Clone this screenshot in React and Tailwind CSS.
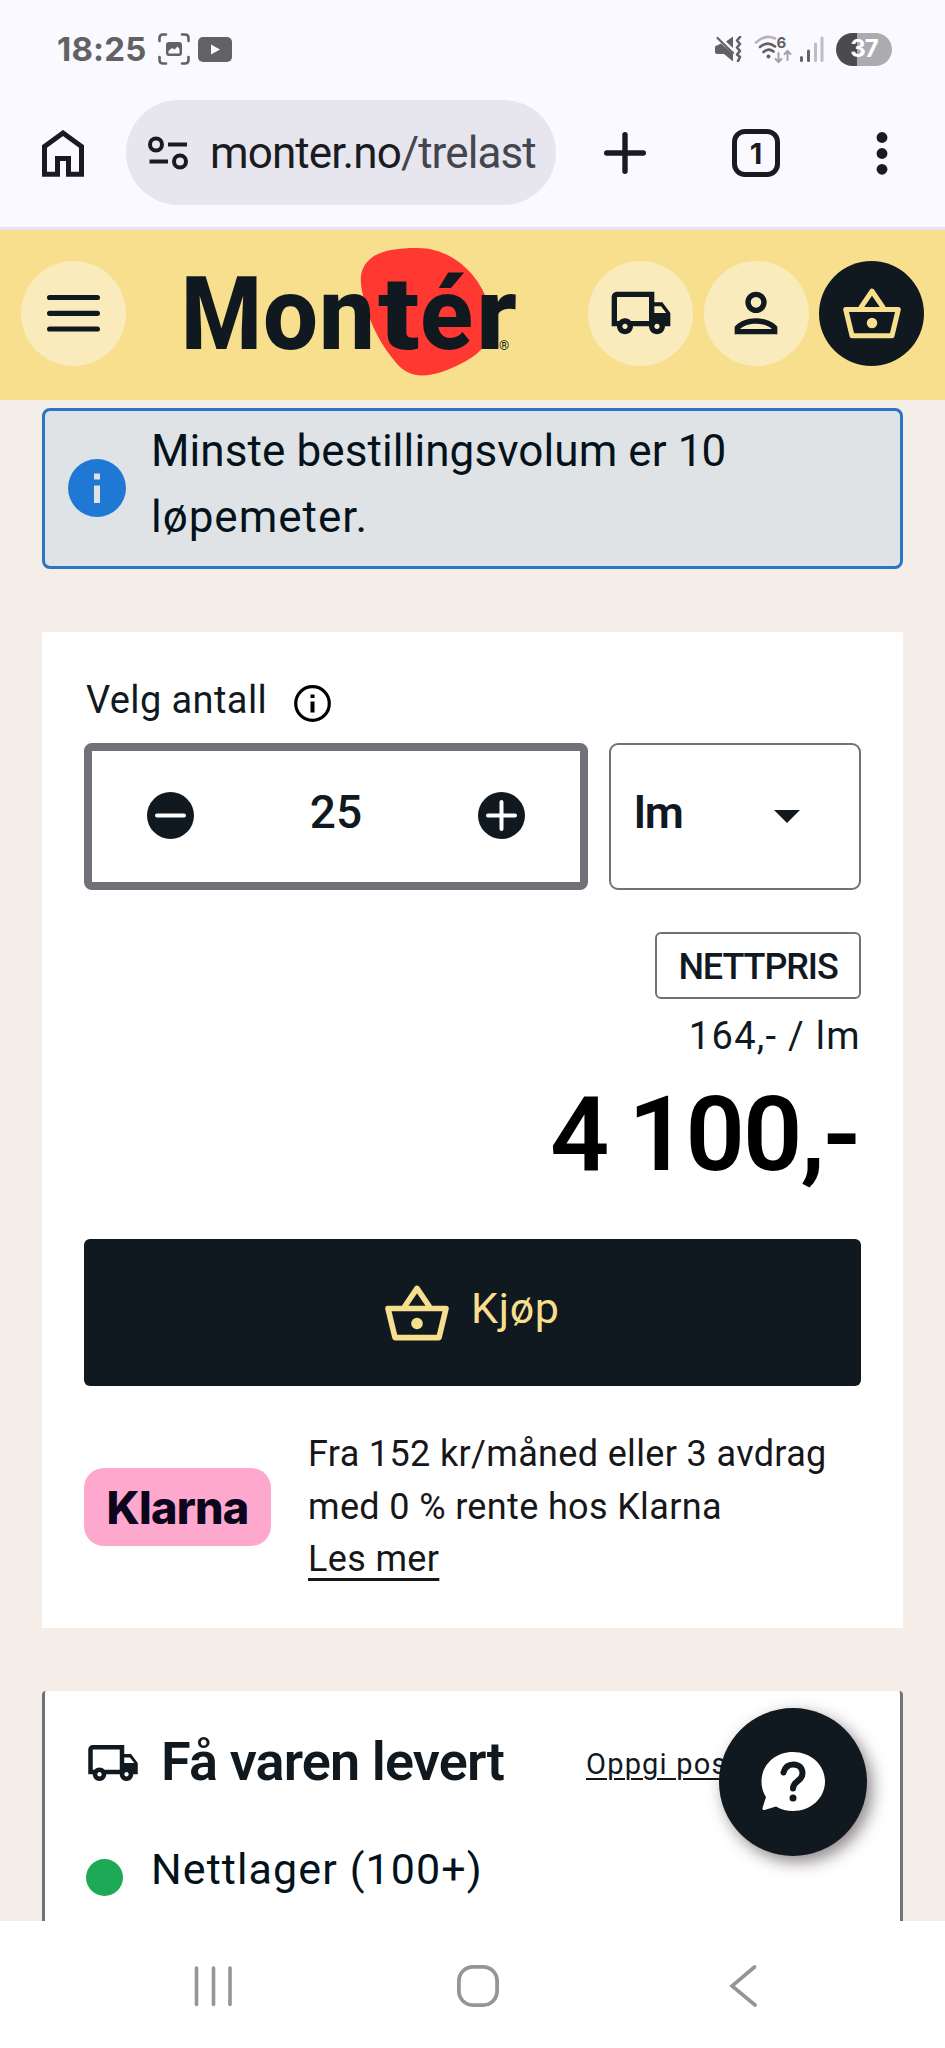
import { MdOutlineLocalShipping } from 'react-icons/md';

const logoLetters = [
  { char: 'M', x: 181, width: 81 },
  { char: 'o', x: 263, width: 55 },
  { char: 'n', x: 319, width: 56 },
  { char: 't', x: 378, width: 42 },
  { char: 'é', x: 420, width: 53 },
  { char: 'r', x: 476, width: 41 },
];

function BasketIcon({ className }) {
  return (
    <svg className={className} viewBox="0 0 64 56" fill="none" stroke="currentColor" strokeWidth="5.6" strokeLinejoin="round" strokeLinecap="round">
      <path d="M20 21 L32 3.4 L44 21" />
      <path d="M3 23.5 H61 L54 52.6 H10 Z" />
      <circle cx="32" cy="38.5" r="5.8" fill="currentColor" stroke="none" />
    </svg>
  );
}

function StatusBar() {
  return (
    <div className="flex h-[98px] items-center justify-between pl-[57px] pr-[53px] text-[#626264]">
      <div className="flex items-center">
        <span className="w-[101px] font-['Inter'] text-[33px] font-bold leading-none tracking-[0.2px]">18:25</span>
        <svg className="h-8 w-8" viewBox="0 0 32 32" fill="none" stroke="currentColor" strokeWidth="2.6" strokeLinecap="round">
          <path d="M1.5 8 V5 Q1.5 1.5 5 1.5 H8 M24 1.5 H27 Q30.5 1.5 30.5 5 V8 M30.5 24 V27 Q30.5 30.5 27 30.5 H24 M8 30.5 H5 Q1.5 30.5 1.5 27 V24" />
          <rect x="8" y="9" width="16" height="14" rx="3" fill="currentColor" stroke="none" />
          <path d="M10.5 20.5 V18 L14 15 L16.5 16.5 L19.5 13.5 L21.5 16 V20.5 Z" fill="#f9f9ff" stroke="none" />
        </svg>
        <svg className="ml-2 h-[25px] w-[34px]" viewBox="0 0 34 25">
          <rect width="34" height="25" rx="5" fill="currentColor" />
          <path d="M13 7.5 V17.5 L22 12.5 Z" fill="#f9f9ff" />
        </svg>
      </div>
      <div className="flex items-center">
        <svg className="h-[26px] w-[27px]" viewBox="0 0 27 26" fill="none" stroke="currentColor">
          <path d="M0 11.5 Q0 9.500 2 9.500 L6 7.500 L18 18 V25.500 L9 18 H2 Q0 18 0 16 Z M11 5.500 L18 0.500 V12 Z" fill="currentColor" stroke="none" />
          <path d="M2.500 2 L18 17" strokeWidth="2.2" strokeLinecap="round" />
          <path d="M25 1 L22 4.500 L25 8 L22 11.500 L25 15 L22 18.500 L25 21 L23 25" strokeWidth="2.6" strokeLinecap="round" strokeLinejoin="round" />
        </svg>
        <svg className="ml-3 h-[30px] w-[38px]" viewBox="0 0 38 30" fill="none" strokeLinecap="round">
          <path d="M2 8.5 Q11 0 21 4.5" stroke="#b5b5b9" strokeWidth="2.6" />
          <path d="M6 13 Q13.5 6.5 21 12.5 M9.5 18 Q14.5 13.5 19.5 17.5" stroke="currentColor" strokeWidth="2.6" />
          <circle cx="14.5" cy="22.5" r="2" fill="currentColor" />
          <path d="M24.5 19 V28 M21.5 25 L24.5 28 L27.5 25 M33.5 26 V17 M30.5 20 L33.5 17 L36.5 20" stroke="#a4a4a8" strokeWidth="2" />
          <text x="22.5" y="13.5" fill="#626264" fontFamily="Inter" fontSize="15" fontWeight="700">6</text>
        </svg>
        <svg className="ml-2 h-[27px] w-6" viewBox="0 0 24 27" strokeWidth="3" strokeLinecap="round">
          <path d="M1.5 21.5 V24.5 M8.5 15 V24.5" stroke="currentColor" />
          <path d="M15.5 8 V24.5 M22 2 V24.5" stroke="#bdbdc1" />
        </svg>
        <div className="ml-3 flex h-[33px] w-[56px] items-center justify-center rounded-full bg-[linear-gradient(90deg,#4b4b4d_37%,#acacb0_37%)] font-['Inter'] text-[24px] font-bold leading-none tracking-[-1px] text-white">
          37
        </div>
      </div>
    </div>
  );
}

function BrowserBar() {
  return (
    <div className="flex h-[132px] items-start border-b-[3px] border-[#e4e4ea] pl-[42px] pt-0.5 text-[#1a1b21]">
      <svg className="mt-[30px] h-[47px] w-[42px]" viewBox="0 0 42 47" fill="none" stroke="currentColor" strokeWidth="5">
        <path d="M2.5 16.5 L21 3 L39.5 16.5 V44.3 H26.5 V28.5 H15.5 V44.3 H2.5 Z" />
      </svg>
      <div className="ml-[42px] flex h-[105px] w-[430px] items-center rounded-full bg-[#e7e6ee] pl-[22px]">
        <svg className="h-[34px] w-10" viewBox="0 0 40 34" fill="none" stroke="currentColor" strokeWidth="4">
          <circle cx="8" cy="8.5" r="6" />
          <circle cx="32" cy="25.5" r="6" />
          <path d="M20 8.5 H39 M1.5 25.5 H20" />
        </svg>
        <div className="ml-[22px] w-[326px] overflow-hidden whitespace-nowrap font-['Roboto'] text-[44px] leading-[60px] tracking-[-0.9px]">
          monter.no<span className="text-[#44464f]">/trelast/</span>
        </div>
      </div>
      <svg className="ml-12 mt-8 h-[42px] w-[42px]" viewBox="0 0 42 42" stroke="currentColor" strokeWidth="5.4" strokeLinecap="round">
        <path d="M21 2.7 V39.3 M2.7 21 H39.3" />
      </svg>
      <div className="ml-[86px] mt-[29px] flex h-12 w-12 items-center justify-center rounded-[13px] border-[5px] border-current font-['Inter'] text-[29px] font-bold leading-none">
        1
      </div>
      <svg className="ml-[96px] mt-8 h-[43px] w-3" viewBox="0 0 12 43" fill="currentColor">
        <circle cx="6" cy="5.5" r="5.4" />
        <circle cx="6" cy="21.5" r="5.4" />
        <circle cx="6" cy="37.3" r="5.4" />
      </svg>
    </div>
  );
}

function SiteHeader() {
  return (
    <header className="flex h-[170px] items-center bg-[#f8df8e] px-[21px] pb-1 text-[#10191f]">
      <button className="flex h-[105px] w-[105px] items-center justify-center rounded-full bg-[#faebbc]">
        <svg className="h-10 w-[53px]" viewBox="0 0 53 40" stroke="currentColor" strokeWidth="5.2" strokeLinecap="round">
          <path d="M2.6 4.5 H50.4 M2.6 20.3 H50.4 M2.6 36 H50.4" />
        </svg>
      </button>
      <svg className="ml-[54px] h-[140px] w-[345px]" viewBox="180 243 345 140">
        <path d="M416 248 C453 247 481 277 488 304 C496 330 488 350 466 361 C430 381 410 378 398 365 C382 347 371 326 366 306 C358 281 358 267 374 256 C384 250 400 248 416 248 Z" fill="#ff3831" />
        {logoLetters.map(({ char, x, width }) => (
          <text key={char} x={x} y="349" textLength={width} lengthAdjust="spacingAndGlyphs" fontFamily="Roboto" fontSize="102" fontWeight="800" fill="#10191f">
            {char}
          </text>
        ))}
        <text x="499" y="350" fontFamily="Roboto" fontSize="13" fill="#10191f">®</text>
      </svg>
      <div className="ml-auto flex gap-[10.5px]">
        <button className="flex h-[105px] w-[105px] items-center justify-center rounded-full bg-[#faebbc]">
          <MdOutlineLocalShipping className="h-16 w-16" />
        </button>
        <button className="flex h-[105px] w-[105px] items-center justify-center rounded-full bg-[#faebbc]">
          <svg className="h-16 w-16" viewBox="0 0 24 24" fill="none" stroke="currentColor" strokeWidth="2">
            <circle cx="12" cy="8" r="3" />
            <path fillRule="evenodd" d="M4 20 V17.2 C5.5 15.2 8.8 14 12 14 S18.5 15.2 20 17.2 V20 Z M6 18 H18 C16.5 16.6 14.3 16 12 16 S7.5 16.6 6 18 Z" fill="currentColor" stroke="none" />
          </svg>
        </button>
        <button className="flex h-[105px] w-[105px] items-center justify-center rounded-full bg-[#10191f]">
          <BasketIcon className="h-[51px] w-[58px] text-[#f8df8e]" />
        </button>
      </div>
    </header>
  );
}

function Notice() {
  return (
    <div className="mx-[42px] mt-2 flex h-[161px] items-start rounded-lg border-[3px] border-[#2877c7] bg-[#dfe3e6] pl-[23px]">
      <svg className="mt-12 h-[58px] w-[58px]" viewBox="0 0 58 58">
        <circle cx="29" cy="29" r="29" fill="#1f78d4" />
        <path d="M29 14.5 V20.5 M29 26.5 V44" stroke="#dfe3e6" strokeWidth="6" />
      </svg>
      <p className="ml-[25px] mt-[7px] font-['Roboto'] text-[44px] leading-[66px] tracking-[0.1px] text-[#04121c]">
        Minste bestillingsvolum er <span className="tracking-[-1px]">10</span>
        <br />
        <span className="tracking-[1px]">løpemeter.</span>
      </p>
    </div>
  );
}

function QuantityPicker() {
  return (
    <div className="flex h-[147px] gap-[21px]">
      <div className="flex w-[504px] items-center justify-between rounded-lg border-8 border-[#707277] px-[55px]">
        <svg className="mb-0.5 h-[47px] w-[47px]" viewBox="0 0 47 47">
          <circle cx="23.5" cy="23.5" r="23.5" fill="#10191f" />
          <path d="M10 23.5 H37" stroke="#fff" strokeWidth="4" strokeLinecap="round" />
        </svg>
        <span className="mb-[9px] font-['Roboto'] text-[46px] font-medium leading-none text-[#10191f]">25</span>
        <svg className="mb-0.5 h-[47px] w-[47px]" viewBox="0 0 47 47">
          <circle cx="23.5" cy="23.5" r="23.5" fill="#10191f" />
          <path d="M10 23.5 H37 M23.5 10 V37" stroke="#fff" strokeWidth="4" strokeLinecap="round" />
        </svg>
      </div>
      <div className="flex w-[252px] items-center rounded-[9px] border-2 border-[#707277] pl-[23px]">
        <span className="mb-[9px] w-[140px] font-['Roboto'] text-[45px] font-semibold leading-none tracking-[-1px] text-[#10191f]">lm</span>
        <svg className="h-[13px] w-[26px]" viewBox="0 0 26 13" fill="#10191f">
          <path d="M0 0 H26 L13 13 Z" />
        </svg>
      </div>
    </div>
  );
}

function PurchaseCard() {
  return (
    <section className="mx-[42px] mt-[63px] h-[996px] bg-white px-[42px] pt-[46px] font-['Roboto'] text-[#10191f]">
      <div className="flex h-[65px] items-start pl-[2px]">
        <span className="text-[38px] leading-[44px] tracking-[0.4px]">Velg antall</span>
        <svg className="ml-[27px] mt-[7px] h-[37px] w-[37px]" viewBox="0 0 37 37" fill="none" stroke="#000">
          <circle cx="18.5" cy="18.5" r="16.8" strokeWidth="3.2" />
          <path d="M18.5 9.5 V13 M18.5 16.5 V27.5" strokeWidth="4" />
        </svg>
      </div>
      <QuantityPicker />
      <div className="mt-[42px] flex flex-col items-end">
        <div className="flex h-[67px] w-[206px] items-center justify-center rounded-md border-2 border-[#707277] pt-0.5 text-[36px] font-medium leading-none tracking-[-1.1px]">
          NETTPRIS
        </div>
        <div className="mt-[15px] text-[38px] leading-[44px] tracking-[1.3px]">164,- / lm</div>
        <div className="mt-[17px] flex h-[120px] items-center whitespace-pre pr-0.5 text-[104px] font-semibold leading-none tracking-[-2px] text-black [word-spacing:-3px]">
          4 100,-
        </div>
      </div>
      <button className="mt-11 flex h-[147px] w-full items-center rounded-md bg-[#10191f] pl-[301px] text-[#f8df8e]">
        <BasketIcon className="h-[56px] w-16" />
        <span className="mb-[9px] ml-[22px] text-[43px] leading-none tracking-[0.7px]">Kjøp</span>
      </button>
      <div className="mt-[42px] flex items-start">
        <div className="mt-10 flex h-[78px] w-[187px] items-center justify-center rounded-[20px] bg-[#ffa8cd] font-['Inter'] text-[45px] font-extrabold leading-none tracking-[-0.8px] text-[#0b051d]">
          Klarna
        </div>
        <p className="ml-[37px] whitespace-nowrap text-[36px] leading-[52.5px] tracking-[0.35px] text-[#17171a]">
          Fra 152 kr/måned eller 3 avdrag
          <br />
          med 0 % rente hos Klarna
          <br />
          <a className="underline decoration-[3px] underline-offset-[7px]">Les mer</a>
        </p>
      </div>
    </section>
  );
}

function DeliveryCard() {
  return (
    <section className="mx-[42px] mt-[63px] h-[230px] rounded-t border-x-[3px] border-[#737375] bg-white pl-[41px] font-['Roboto'] text-[#10191f]">
      <div className="flex items-start pt-[39px]">
        <MdOutlineLocalShipping className="mt-[6px] h-[54px] w-[54px]" />
        <h2 className="ml-[21px] w-[425px] whitespace-nowrap text-[54px] font-semibold leading-[64px] tracking-[-0.85px]">Få varen levert</h2>
        <a className="mt-[14px] whitespace-nowrap text-[29px] leading-[40px] tracking-[1.2px] underline decoration-2 underline-offset-4">Oppgi postnr</a>
      </div>
      <div className="mt-[50px] flex items-start">
        <div className="mt-[15px] h-[37px] w-[37px] rounded-full bg-[#1ea956]" />
        <span className="ml-7 text-[43px] leading-[50px] tracking-[1.1px] text-[#04121c]">Nettlager (100+)</span>
      </div>
    </section>
  );
}

function HelpButton() {
  return (
    <button className="absolute left-[719px] top-[1708px] flex h-[148px] w-[148px] items-center justify-center rounded-full bg-[#10191f] shadow-[5px_6px_16px_rgba(30,15,20,0.5)]">
      <svg className="h-[60px] w-16" viewBox="0 0 64 60">
        <path d="M32 0 C50 0 64 13 64 29.5 S50 59 32 59 C26 59 20 57.5 15 54.5 L3.5 58 Q1.2 58.5 1.5 56 L5 45 C2 40.5 0.5 35 0.5 29.5 C0.5 13 14 0 32 0 Z" fill="#fff" />
        <path d="M22.5 20.5 C24 14.5 28 12.5 32.5 12.5 C38.5 12.5 41.5 16.5 41.5 21.5 C41.5 29.5 32 28.5 32 36.5" fill="none" stroke="#10191f" strokeWidth="6" strokeLinecap="round" />
        <circle cx="32" cy="46" r="3.5" fill="#10191f" />
      </svg>
    </button>
  );
}

function SystemNav() {
  return (
    <nav className="flex h-[127px] items-start bg-white pl-[194px] pt-11 text-[#959595]">
      <svg className="h-[42px] w-[39px]" viewBox="0 0 39 42" stroke="currentColor" strokeWidth="3.6" strokeLinecap="round">
        <path d="M2.5 3 V39.5 M19.5 3 V39.5 M36 3 V39.5" />
      </svg>
      <svg className="ml-[224px] h-[42px] w-[42px]" viewBox="0 0 42 42" fill="none" stroke="currentColor" strokeWidth="3.8">
        <rect x="1.9" y="1.9" width="38.2" height="38.2" rx="14" />
      </svg>
      <svg className="ml-[230px] h-[42px] w-[28px]" viewBox="0 0 28 42" fill="none" stroke="currentColor" strokeWidth="3.6" strokeLinecap="round">
        <path d="M25.5 2 L3 21 L26 40" />
      </svg>
    </nav>
  );
}

export default function App() {
  return (
    <div className="relative h-[2048px] w-[945px] overflow-hidden bg-[#f5eee8]">
      <div className="bg-[#f9f9ff]">
        <StatusBar />
        <BrowserBar />
      </div>
      <SiteHeader />
      <Notice />
      <PurchaseCard />
      <DeliveryCard />
      <SystemNav />
      <HelpButton />
    </div>
  );
}
